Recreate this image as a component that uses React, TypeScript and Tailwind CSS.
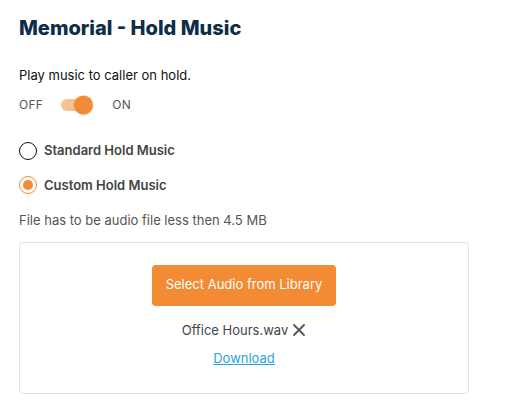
import { useState } from 'react'

export default function App() {
  const [on, setOn] = useState(true)
  const [choice, setChoice] = useState<'standard' | 'custom'>('custom')

  return (
    <main
      className="min-h-screen w-[522px] bg-white pl-[19px] pt-[15px] text-[13px]"
      style={{ fontFamily: 'Inter, "Open Sans", sans-serif' }}
    >
      {/* Title */}
      <h1 className="text-[20px] font-extrabold leading-[26px] text-[#0e2e47]">Memorial - Hold Music</h1>

      <p className="mt-[25px] leading-[18px] text-[#111]">Play music to caller on hold.</p>

      {/* On / off switch */}
      <div className="mt-[12px] flex items-center text-[12px] tracking-wide text-[#555]">
        <span>OFF</span>
        <button
          onClick={() => setOn(!on)}
          className={`relative ml-[18px] h-[12px] w-[30px] rounded-full ${on ? 'bg-[#f6c293]' : 'bg-[#ccc]'}`}
        >
          <span
            className={`absolute top-1/2 h-[19px] w-[19px] -translate-y-1/2 rounded-full shadow ${on ? 'left-[13px] bg-[#f28b34]' : 'left-[-3px] bg-[#f5f5f5]'}`}
          />
        </button>
        <span className="ml-[21px]">ON</span>
      </div>

      {/* Radios */}
      <div className="mt-[27px] flex flex-col gap-[15px]">
        <label className="flex cursor-pointer items-center gap-[7px]" onClick={() => setChoice('standard')}>
          <span
            className={`flex h-[18px] w-[18px] items-center justify-center rounded-full border ${choice === 'standard' ? 'border-[#f28b34]' : 'border-[#111]'}`}
          >
            {choice === 'standard' && <span className="h-[10px] w-[10px] rounded-full bg-[#f28b34]" />}
          </span>
          <span className="font-semibold text-[#444]">Standard Hold Music</span>
        </label>
        <label className="flex cursor-pointer items-center gap-[7px]" onClick={() => setChoice('custom')}>
          <span
            className={`flex h-[18px] w-[18px] items-center justify-center rounded-full border ${choice === 'custom' ? 'border-[#f28b34]' : 'border-[#111]'}`}
          >
            {choice === 'custom' && <span className="h-[10px] w-[10px] rounded-full bg-[#f28b34]" />}
          </span>
          <span className="font-semibold text-[#444]">Custom Hold Music</span>
        </label>
      </div>

      <p className="mt-[16px] text-[#555]">File has to be audio file less then 4.5 MB</p>

      {/* Upload box */}
      <div className="mt-[11px] flex w-[450px] flex-col items-center rounded border border-[#e2e2e2] pb-[24px] pt-[22px]">
        <button className="h-[41px] rounded bg-[#f28b34] px-[14px] text-white">Select Audio from Library</button>
        <div className="mt-[15px] flex items-center gap-[4px] text-[#444]">
          <span>Office Hours.wav</span>
          <svg width="14" height="14" viewBox="0 0 14 14" stroke="#555" strokeWidth="1.8" strokeLinecap="round">
            <path d="M2 2 L12 12 M12 2 L2 12" />
          </svg>
        </div>
        <a href="#" className="mt-[9px] text-[#29a3db] underline">
          Download
        </a>
      </div>
    </main>
  )
}
